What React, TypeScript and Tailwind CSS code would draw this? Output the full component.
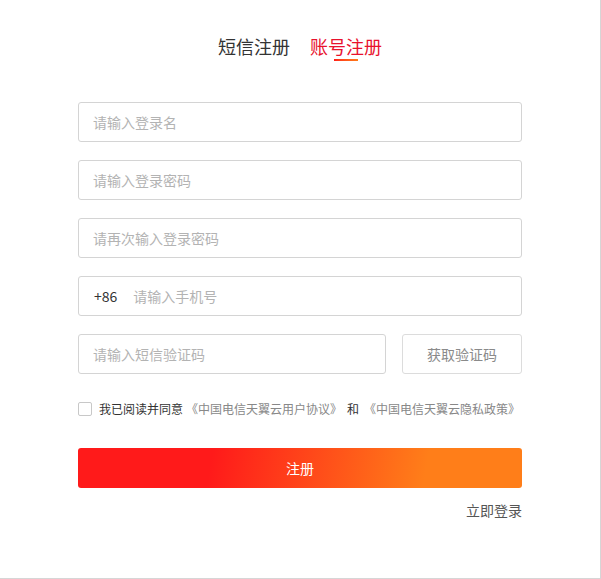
import { useState } from 'react'

function App() {
  const [tab, setTab] = useState('account')
  const [agree, setAgree] = useState(false)

  const inputCls =
    'w-full h-10 px-[14px] border border-[#d4d4d4] rounded-[3px] text-sm text-[#333] placeholder-[#b3b3b3] outline-none focus:border-[#999]'

  return (
    <div
      className="w-[601px] h-[579px] bg-white border-r border-b border-[#d6d6d6] text-[#333]"
      style={{ fontFamily: '"Noto Sans CJK SC", "Noto Sans", sans-serif' }}
    >
      <div className="flex justify-center gap-5 pt-[34px]">
        <button
          onClick={() => setTab('sms')}
          className={`relative text-lg leading-6 ${tab === 'sms' ? 'text-[#e8112d]' : 'text-[#333]'}`}
        >
          短信注册
          {tab === 'sms' && (
            <span className="absolute left-1/2 -translate-x-1/2 top-[25px] w-6 h-[2px] bg-gradient-to-r from-[#ff1a1a] to-[#ff7a1a]" />
          )}
        </button>
        <button
          onClick={() => setTab('account')}
          className={`relative text-lg leading-6 ${tab === 'account' ? 'text-[#e8112d]' : 'text-[#333]'}`}
        >
          账号注册
          {tab === 'account' && (
            <span className="absolute left-1/2 -translate-x-1/2 top-[25px] w-6 h-[2px] bg-gradient-to-r from-[#ff1a1a] to-[#ff7a1a]" />
          )}
        </button>
      </div>

      <form className="mt-[44px] mx-[78px] flex flex-col gap-[18px]">
        <input className={inputCls} placeholder="请输入登录名" />
        <input type="password" className={inputCls} placeholder="请输入登录密码" />
        <input type="password" className={inputCls} placeholder="请再次输入登录密码" />
        <div className="flex items-center h-10 border border-[#d4d4d4] rounded-[3px] pl-[15px]">
          <span className="text-sm text-[#333] mr-[16px]">+86</span>
          <input
            className="flex-1 h-full pr-[15px] text-sm text-[#333] placeholder-[#b3b3b3] outline-none bg-transparent"
            placeholder="请输入手机号"
          />
        </div>
        <div className="flex gap-4">
          <input className={inputCls} placeholder="请输入短信验证码" />
          <button
            type="button"
            className="shrink-0 w-[120px] h-10 border border-[#dcdcdc] rounded-[3px] text-sm text-[#8a8a8a]"
          >
            获取验证码
          </button>
        </div>

        <label className="flex items-center mt-[9px] text-xs text-[#333] cursor-pointer">
          <input
            type="checkbox"
            checked={agree}
            onChange={(e) => setAgree(e.target.checked)}
            className="appearance-none w-[14px] h-[14px] border border-[#c8c8c8] rounded-[2px] mr-[7px] checked:bg-[#e8112d] checked:border-[#e8112d]"
          />
          <span>我已阅读并同意</span>
          <span className="ml-[3px] text-[#888]">《中国电信天翼云用户协议》</span>
          <span className="mx-[5px]">和</span>
          <span className="text-[#888]">《中国电信天翼云隐私政策》</span>
        </label>

        <button
          type="button"
          className="mt-[13px] h-10 rounded-[3px] text-sm text-white"
          style={{ background: 'linear-gradient(100deg, #ff1a1a 30%, #ff7e19 78%)' }}
        >
          注册
        </button>
      </form>

      <div className="mx-[78px] mt-[12px] flex justify-end">
        <a href="#" className="text-sm text-[#555]">立即登录</a>
      </div>
    </div>
  )
}

export default App
